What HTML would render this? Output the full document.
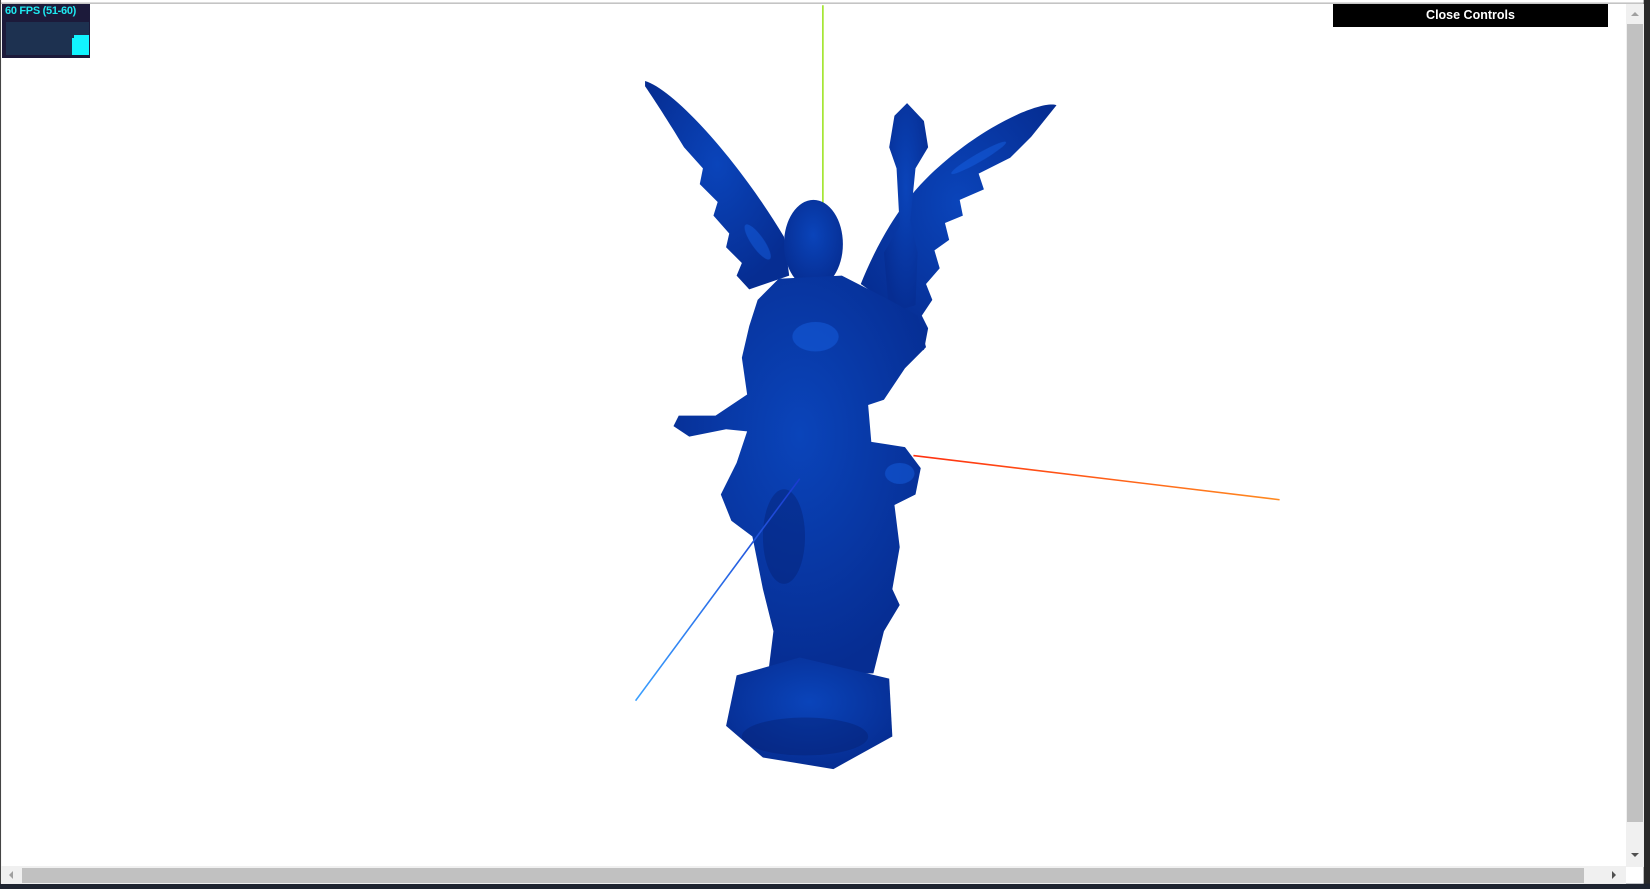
<!DOCTYPE html>
<html><head><meta charset="utf-8"><style>
html,body{margin:0;padding:0;width:1650px;height:889px;overflow:hidden;background:#fff;font-family:"Liberation Sans",sans-serif}
#wrap{position:absolute;left:0;top:0;width:1650px;height:889px}
#fps{position:absolute;left:2px;top:4px;width:88px;height:54px;background:#1c1a3a}
#fps .t{position:absolute;left:3px;top:1px;color:#1ee8f0;font-size:11px;font-weight:bold;letter-spacing:-0.3px}
#fps .g{position:absolute;left:4px;top:18px;width:83px;height:33px;background:#1d3150}
#fps .b{position:absolute;left:72px;top:31px;width:15px;height:20px;background:#11f4ff}
#fps .b2{position:absolute;left:70px;top:34px;width:3px;height:17px;background:#11f4ff}
#cc{position:absolute;left:1333px;top:4px;width:275px;height:23px;background:#000;color:#fff;font-size:12.5px;font-weight:bold;text-align:center;line-height:22px}
#vs{position:absolute;left:1626px;top:4px;width:18px;height:863px;background:#f0f0f0}
#vs .th{position:absolute;left:1px;top:20px;width:16px;height:798px;background:#c1c1c1}
#hs{position:absolute;left:1px;top:866px;width:1625px;height:18px;background:#f0f0f0}
#hs .th{position:absolute;left:21px;top:2px;width:1562px;height:15px;background:#c1c1c1}
.ar{position:absolute;width:0;height:0}
</style></head><body><div id="wrap">
<svg width="1650" height="889" viewBox="0 0 1568 845" preserveAspectRatio="none" style="position:absolute;left:0;top:0">
<defs>
<linearGradient id="ax" x1="0" y1="0" x2="1" y2="0"><stop offset="0" stop-color="#ff3010"/><stop offset="1" stop-color="#ff8a20"/></linearGradient>
<linearGradient id="bx" x1="0" y1="1" x2="1" y2="0"><stop offset="0" stop-color="#3aa0ff"/><stop offset="1" stop-color="#1a3ad0"/></linearGradient>
<radialGradient id="st" cx="0.5" cy="0.4" r="0.6"><stop offset="0" stop-color="#0a44ba"/><stop offset="1" stop-color="#062d92"/></radialGradient>
</defs>
<line x1="0" y1="3" x2="1568" y2="3" stroke="#a0a0a0" stroke-width="1"/>
<line x1="0.5" y1="0" x2="0.5" y2="845" stroke="#444" stroke-width="1"/>
<line x1="782" y1="5" x2="782" y2="195" stroke="#8ee000" stroke-width="1.3"/>
<g fill="url(#st)">
<path d="M613,77 C640,85 700,150 745,225 L750,262 L712,275 L700,262 L705,250 L690,235 L693,222 L678,205 L682,192 L665,175 L668,160 L650,140 C638,120 622,95 613,82 Z"/>
<path d="M1004,100 C990,95 930,120 880,170 C850,200 830,240 818,270 L860,300 L878,333 L882,312 L876,300 L886,285 L880,270 L893,255 L888,238 L902,228 L898,212 L915,205 L912,190 L935,180 L930,165 L960,150 L980,130 Z"/>
<path d="M850,110 L862,98 L878,115 L882,140 L870,160 L865,210 L872,240 L870,290 L845,298 L840,240 L855,215 L852,160 L845,140 Z"/>
<ellipse cx="773" cy="232" rx="28" ry="42"/>
<path d="M740,265 L800,262 L845,285 L872,300 L880,330 L860,350 L840,380 L825,385 L828,420 L860,425 L875,445 L870,470 L850,480 L855,520 L848,560 L855,575 L840,600 L830,640 L730,640 L735,600 L725,560 L715,510 L695,495 L685,470 L700,440 L710,410 L690,408 L655,415 L640,405 L645,395 L680,395 L710,375 L705,340 L712,310 L720,285 Z"/>
<path d="M700,642 L760,625 L845,645 L848,700 L792,731 L725,720 L690,690 Z"/>
</g>
<g fill="#1a66e8" opacity="0.45">
<ellipse cx="775" cy="320" rx="22" ry="14"/>
<ellipse cx="855" cy="450" rx="14" ry="10"/>
<ellipse cx="720" cy="230" rx="6" ry="20" transform="rotate(-35 720 230)"/>
<ellipse cx="930" cy="150" rx="30" ry="4" transform="rotate(-30 930 150)"/>
</g>
<g fill="#041f6e" opacity="0.4">
<ellipse cx="745" cy="510" rx="20" ry="45"/>
<ellipse cx="765" cy="700" rx="60" ry="18"/>
</g>
<line x1="868" y1="433" x2="1216" y2="475" stroke="url(#ax)" stroke-width="1.5"/>
<line x1="760" y1="455" x2="604" y2="666" stroke="url(#bx)" stroke-width="1.5"/>
<rect x="1562" y="0" width="6" height="845" fill="#2a2a2a"/>
<rect x="0" y="840" width="1568" height="5" fill="#1e2430"/>
</svg>
<div id="fps"><div class="t">60 FPS (51-60)</div><div class="g"></div><div class="b"></div><div class="b2"></div></div>
<div id="cc">Close Controls</div>
<div id="vs"><div class="th"></div>
<div class="ar" style="left:5px;top:8px;border-left:4px solid transparent;border-right:4px solid transparent;border-bottom:4px solid #a0a0a0"></div>
<div class="ar" style="left:5px;top:849px;border-left:4px solid transparent;border-right:4px solid transparent;border-top:4px solid #505050"></div></div>
<div id="hs"><div class="th"></div>
<div class="ar" style="left:8px;top:5px;border-top:4px solid transparent;border-bottom:4px solid transparent;border-right:4px solid #a0a0a0"></div>
<div class="ar" style="left:1611px;top:5px;border-top:4px solid transparent;border-bottom:4px solid transparent;border-left:4px solid #505050"></div></div>
</div></body></html>
